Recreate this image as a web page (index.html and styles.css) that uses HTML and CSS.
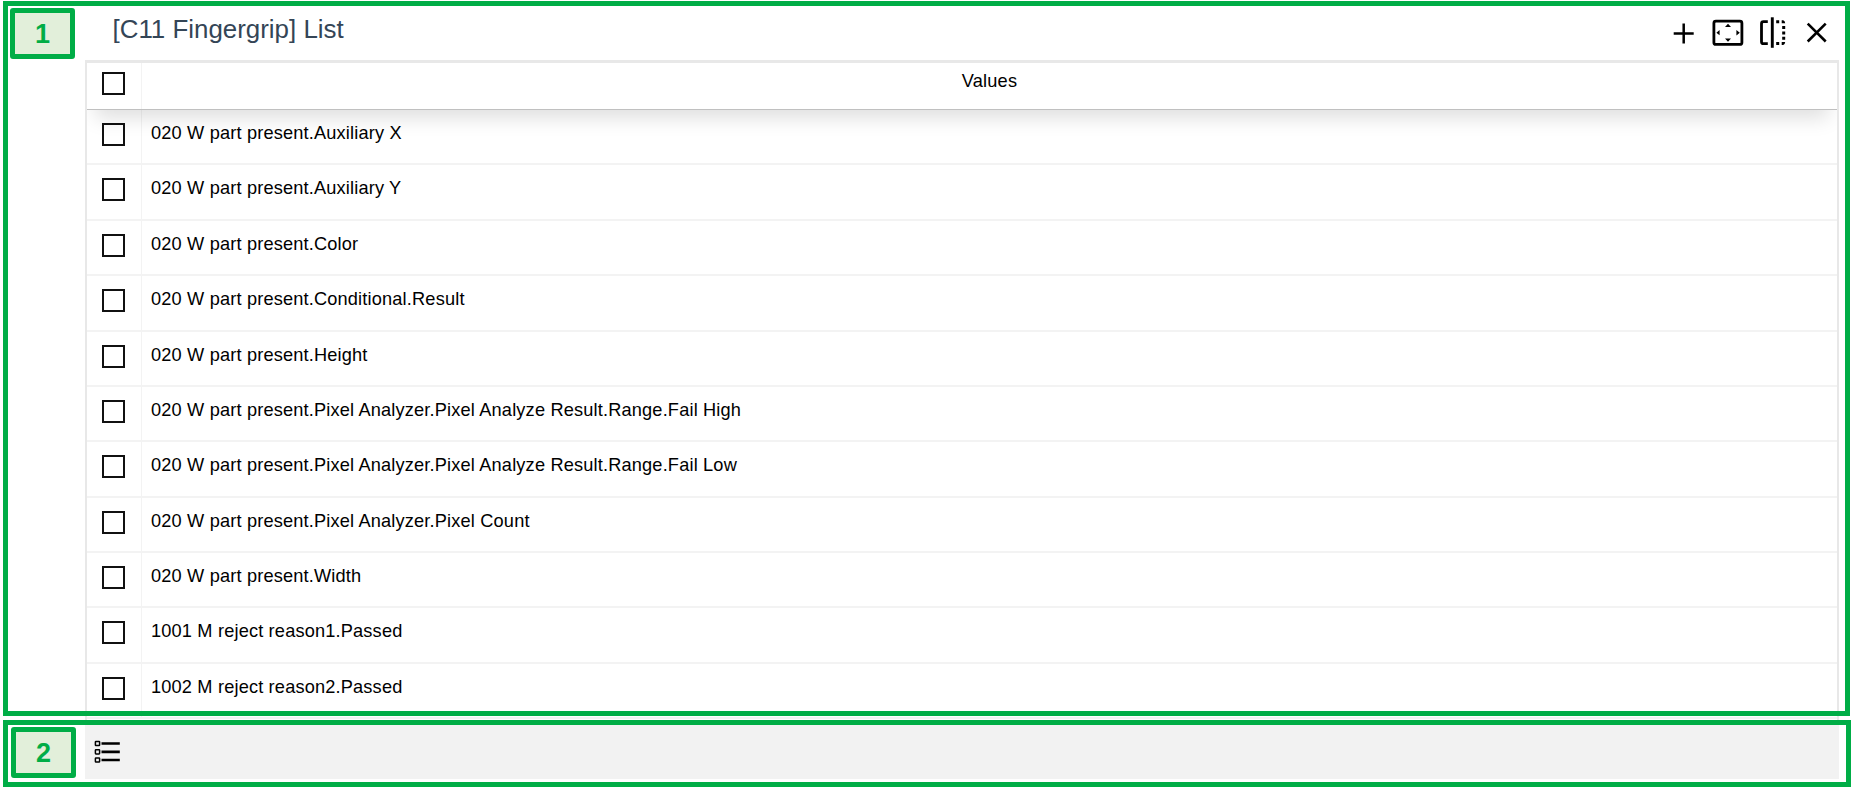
FILE: index.html
```
<!DOCTYPE html>
<html lang="en">
<head>
<meta charset="utf-8">
<title>[C11 Fingergrip] List</title>
<link rel="stylesheet" href="styles.css">
</head>
<body>
<main class="app">
  <header class="bar">
    <h1 class="title"><span>[C11 Fingergrip] List</span></h1>
    <svg class="tools" width="170" height="40" viewBox="1670 10 170 40" fill="none" stroke="#000">
      <path d="M1673.7 33.5h20M1683.7 23.5v20" stroke-width="2.5"/>
      <rect x="1713.9" y="21.2" width="28" height="23.2" rx="2" stroke-width="2.8"/>
      <path d="M1728 23.8l3 3.2h-6zM1728 41.8l3-3.2h-6zM1716.4 32.7l3.2-2.6v5.2zM1739.8 32.7l-3.4-2.8v5.6z" fill="#000" stroke="none"/>
      <path d="M1767.8 21.7h-4.3q-2 0-2 2v18q0 2 2 2h4.3" stroke-width="2.8"/>
      <path d="M1772.3 17.3v30.5" stroke-width="2.9"/>
      <path d="M1776.2 20.2h3v3h-3zM1776.2 42.1h3v3h-3zM1781.7 20.2h1.5q1.8.7 2 3h-3.5zM1782.2 26h3v3h-3zM1782.2 31.4h3v3h-3zM1782.2 36.8h3v3h-3zM1781.7 45.1v-3h3.5q-.2 2.3-2 3z" fill="#000" stroke="none"/>
      <path d="M1807.7 23.7l18 17.8M1825.7 23.7l-18 17.8" stroke-width="2.6"/>
    </svg>
  </header>
  <section class="table">
    <div class="head"><div class="check"><i class="box"></i></div><div class="values">Values</div></div>
    <div class="rows">
      <div class="row"><div class="check"><i class="box"></i></div><div class="cell">020 W part present.Auxiliary X</div></div>
      <div class="row"><div class="check"><i class="box"></i></div><div class="cell">020 W part present.Auxiliary Y</div></div>
      <div class="row"><div class="check"><i class="box"></i></div><div class="cell">020 W part present.Color</div></div>
      <div class="row"><div class="check"><i class="box"></i></div><div class="cell">020 W part present.Conditional.Result</div></div>
      <div class="row"><div class="check"><i class="box"></i></div><div class="cell">020 W part present.Height</div></div>
      <div class="row"><div class="check"><i class="box"></i></div><div class="cell">020 W part present.Pixel Analyzer.Pixel Analyze Result.Range.Fail High</div></div>
      <div class="row"><div class="check"><i class="box"></i></div><div class="cell">020 W part present.Pixel Analyzer.Pixel Analyze Result.Range.Fail Low</div></div>
      <div class="row"><div class="check"><i class="box"></i></div><div class="cell">020 W part present.Pixel Analyzer.Pixel Count</div></div>
      <div class="row"><div class="check"><i class="box"></i></div><div class="cell">020 W part present.Width</div></div>
      <div class="row"><div class="check"><i class="box"></i></div><div class="cell">1001 M reject reason1.Passed</div></div>
      <div class="row"><div class="check"><i class="box"></i></div><div class="cell">1002 M reject reason2.Passed</div></div>
    </div>
  </section>
  <footer class="dock">
    <svg width="28" height="26" viewBox="94 739 28 26" fill="none" stroke="#000">
      <path d="M101.5 743.5h18.3M101.5 751.8h18.3M101.5 760h18.3" stroke-width="2.7"/>
      <g stroke-width="1.5" fill="#f2f2f2"><rect x="95.4" y="741.4" width="4.2" height="4.2" rx=".6"/><rect x="95.4" y="749.7" width="4.2" height="4.2" rx=".6"/><rect x="95.4" y="757.9" width="4.2" height="4.2" rx=".6"/></g>
    </svg>
  </footer>
</main>
<div class="frame frame-list"></div>
<div class="frame frame-dock"></div>
<div class="badge badge-list">1</div>
<div class="badge badge-dock">2</div>
</body>
</html>
```
FILE: styles.css
```
* { box-sizing: border-box; }
body {
  margin: 0;
  height: 789px;
  overflow: hidden;
  position: relative;
  background: #fff;
  color: #000;
  font-family: "Liberation Sans", Arial, sans-serif;
}
.app {
  display: flex;
  flex-direction: column;
  height: 779px;
  padding: 0 13px 0 85px;
}
.bar {
  flex: none;
  height: 60px;
  display: flex;
  justify-content: space-between;
  padding: 10px 0 0 27.5px;
}
.title {
  margin: 4px 0 0;
  font-size: 25.9px;
  line-height: 30px;
  font-weight: 400;
  color: #344556;
}
.tools { margin-right: -1px; }
.table {
  flex: none;
  height: 665px;
  overflow: hidden;
  border: 2px solid #e8e8e8;
  border-top-width: 3px;
  border-bottom: 0;
  font-size: 18.2px;
  letter-spacing: .17px;
}
.head {
  position: relative;
  z-index: 1;
  display: flex;
  height: 47px;
  background: #fff;
  border-bottom: 1.5px solid #c0c0c0;
  box-shadow: 0 16px 20px -8px rgba(0, 0, 0, .13);
}
.check {
  flex: none;
  width: 55px;
  border-right: 1px solid #f3f3f3;
  padding: 13px 0 0 15px;
}
.head .check { padding-top: 9px; }
.box {
  display: block;
  width: 23px;
  height: 23px;
  border: 2px solid #111;
}
.values {
  flex: 1;
  text-align: center;
  line-height: 20px;
  padding: 7.5px 0 0;
}
.row {
  display: flex;
  height: 55.38px;
  border-bottom: 2px solid #f3f3f3;
}
.cell {
  line-height: 20px;
  padding: 13px 0 0 9px;
  white-space: nowrap;
}
.dock {
  flex: 1;
  background: #f2f2f2;
  padding: 14px 0 0 9px;
}
.frame {
  position: absolute;
  z-index: 2;
  border: 5px solid #00ad46;
}
.frame-list { left: 3px; top: 1px; width: 1847px; height: 715px; }
.frame-dock { left: 3px; top: 720px; width: 1848px; height: 67px; }
.badge {
  position: absolute;
  z-index: 3;
  width: 65px;
  height: 51px;
  border: 5px solid #00ad46;
  border-radius: 3px;
  background: #e2efda;
  color: #00ad46;
  font-size: 27px;
  font-weight: 700;
  line-height: 43px;
  text-align: center;
}
.badge-list { left: 10px; top: 8px; }
.badge-dock { left: 11px; top: 727px; }
```
